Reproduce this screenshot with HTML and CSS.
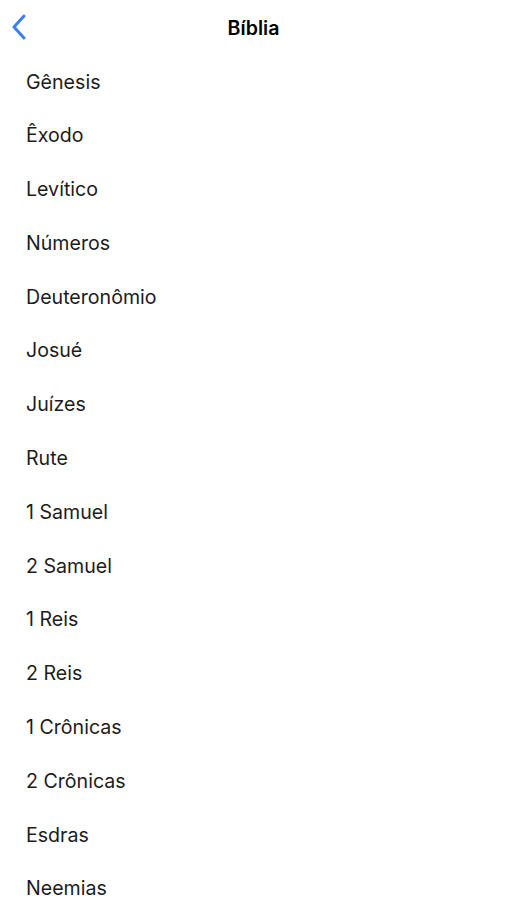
FILE: index.html
```html
<!DOCTYPE html>
<html lang="pt">
<head>
  <meta charset="UTF-8">
  <meta name="viewport" content="width=device-width, initial-scale=1.0">
  <title>Bíblia</title>
  <link rel="stylesheet" href="styles.css">
</head>
<body>
  <header class="navbar">
    <button class="back" aria-label="Voltar">
      <svg width="16" height="26" viewBox="0 0 16 26">
        <path d="M13 2 L3 13 L13 24" fill="none" stroke="#3a7ff6" stroke-width="3" stroke-linecap="round" stroke-linejoin="round"/>
      </svg>
    </button>
    <h1 class="title">Bíblia</h1>
  </header>
  <ul class="books">
    <li>Gênesis</li>
    <li>Êxodo</li>
    <li>Levítico</li>
    <li>Números</li>
    <li>Deuteronômio</li>
    <li>Josué</li>
    <li>Juízes</li>
    <li>Rute</li>
    <li>1 Samuel</li>
    <li>2 Samuel</li>
    <li>1 Reis</li>
    <li>2 Reis</li>
    <li>1 Crônicas</li>
    <li>2 Crônicas</li>
    <li>Esdras</li>
    <li>Neemias</li>
  </ul>
</body>
</html>
```

FILE: styles.css
```css
body {
  margin: 0;
  background: #ffffff;
  color: #1c1c1e;
  font-family: Inter, "Noto Sans", sans-serif;
}

.navbar {
  position: relative;
  height: 55.5px;
  display: flex;
  align-items: center;
  justify-content: center;
}

.back {
  position: absolute;
  left: 11px;
  top: 14px;
  padding: 0;
  border: none;
  background: none;
  cursor: pointer;
}

.back svg {
  display: block;
}

.title {
  margin: 0;
  font-size: 19.6px;
  font-weight: 600;
  color: #000;
}

.books {
  list-style: none;
  margin: 0;
  padding: 0;
}

.books li {
  height: 53.8px;
  line-height: 53.8px;
  padding-left: 26px;
  font-size: 19.6px;
}
```
